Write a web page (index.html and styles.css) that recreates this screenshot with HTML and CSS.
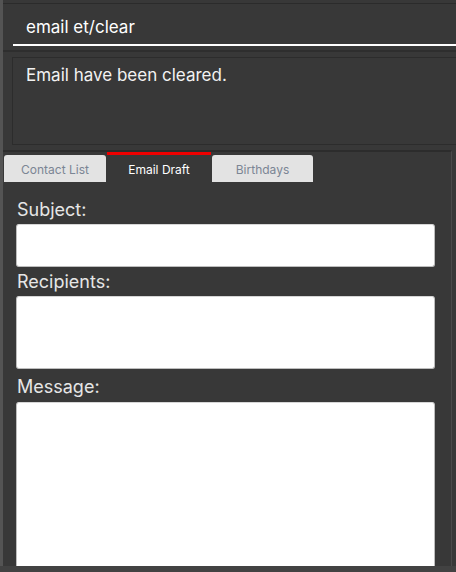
FILE: index.html
```html
<!DOCTYPE html>
<html>
<head>
<meta charset="utf-8">
<link rel="stylesheet" href="styles.css">
</head>
<body>
<div class="app">
  <div class="edge"></div>
  <div class="main">
    <div class="topline"></div>
    <div class="cmd">
      <div class="cmd-field">email et/clear</div>
    </div>
    <div class="sep"></div>
    <div class="result-wrap">
      <div class="result">Email have been cleared.</div>
    </div>
    <div class="tabpane">
      <div class="tabs">
        <div class="tab tab-contacts">Contact List</div>
        <div class="tab tab-draft active">Email Draft</div>
        <div class="tab tab-birthdays">Birthdays</div>
      </div>
      <div class="content">
        <div class="field-label label-subject">Subject:</div>
        <div class="input input-subject"></div>
        <div class="field-label label-recipients">Recipients:</div>
        <div class="input input-recipients"></div>
        <div class="field-label label-message">Message:</div>
        <div class="input input-message"></div>
      </div>
    </div>
  </div>
</div>
<div class="bottom"></div>
</body>
</html>
```
FILE: styles.css
```css
html, body {
  margin: 0;
  padding: 0;
}
body {
  width: 456px;
  height: 572px;
  overflow: hidden;
  background: #383838;
  font-family: Inter, "Liberation Sans", sans-serif;
  color: #ffffff;
}
.app {
  display: flex;
  height: 566px;
}
.edge {
  width: 3px;
  background: #545454;
}
.main {
  flex: 1;
  display: flex;
  flex-direction: column;
  min-width: 0;
}
.topline {
  margin-top: 3px;
  height: 1px;
  background: #2b2b2b;
}
.cmd {
  padding-left: 10px;
}
.cmd-field {
  height: 42px;
  box-sizing: border-box;
  padding: 13px 0 0 13px;
  line-height: 20px;
  font-size: 17px;
  color: #ffffff;
  border-bottom: 2px solid #ffffff;
}
.sep {
  margin-top: 4px;
  height: 2px;
  background: #2e2e2e;
}
.result-wrap {
  padding: 5px 0 0 9px;
}
.result {
  height: 88px;
  box-sizing: border-box;
  border: 1px solid #2c2c2c;
  border-right: none;
  padding: 7px 0 0 13px;
  line-height: 20px;
  font-size: 17px;
  color: #f2f2f2;
}
.tabpane {
  flex: 1;
  display: flex;
  flex-direction: column;
  margin-top: 5px;
  margin-right: 4px;
  border-top: 2px solid #2c2c2c;
  border-right: 1px solid #4a4a4a;
  min-height: 0;
}
.tabs {
  display: flex;
  align-items: flex-end;
  gap: 1px;
  padding-left: 1px;
  height: 30px;
}
.tab {
  height: 27px;
  box-sizing: border-box;
  padding-top: 2px;
  line-height: 25px;
  text-align: center;
  font-size: 12px;
  color: #7b8594;
  background: #e3e3e3;
  border-radius: 3px 3px 0 0;
}
.tab-contacts { width: 102px; }
.tab-draft { width: 104px; }
.tab-birthdays { width: 101px; }
.tab.active {
  height: 30px;
  border-top: 3px solid #ee0000;
  border-radius: 0;
  background: #383838;
  color: #ffffff;
}
.content {
  flex: 1;
  display: flex;
  flex-direction: column;
  padding: 13px 16px 0 13px;
  min-height: 0;
}
.field-label {
  height: 29px;
  line-height: 29px;
  font-size: 18px;
  color: #e6e6e6;
  padding-left: 1px;
}
.label-message {
  margin-top: 2px;
  height: 31px;
  line-height: 31px;
}
.input {
  background: #ffffff;
  border: 1px solid #bdbdbd;
  border-top-color: #d6d6d6;
  border-radius: 3px;
  box-sizing: border-box;
}
.input-subject { height: 43px; }
.input-recipients { height: 73px; }
.input-message {
  flex: 1;
  border-bottom: none;
  border-radius: 3px 3px 0 0;
}
.bottom {
  height: 6px;
  background: #424242;
}
```
